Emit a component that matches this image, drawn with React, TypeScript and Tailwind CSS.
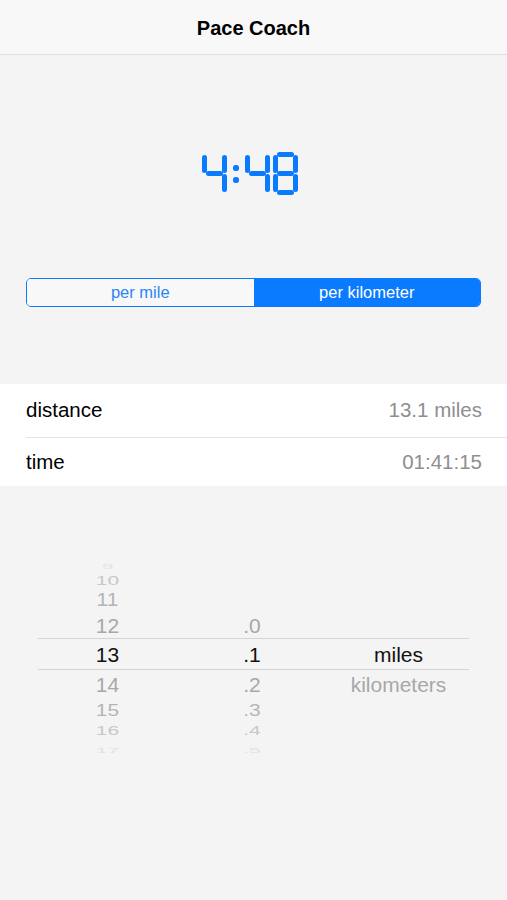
import React from 'react'

const BLUE = '#0a7aff'

// segments of a 7-seg digit, in a 25x43 box
const SEG: Record<string, [number, number, number, number]> = {
  a: [4, 0, 17, 5],
  b: [20, 3, 5, 18],
  c: [20, 22, 5, 18],
  d: [4, 38, 17, 5],
  e: [0, 22, 5, 18],
  f: [0, 3, 5, 18],
  g: [4, 19, 17, 5],
}

const DIGITS: Record<string, string> = {
  '4': 'bcfg',
  '8': 'abcdefg',
}

function Digit({ ch, x }: { ch: string; x: number }) {
  return (
    <g transform={`translate(${x} 0)`}>
      {DIGITS[ch].split('').map(s => {
        const [sx, sy, w, h] = SEG[s]
        return <rect key={s} x={sx} y={sy} width={w} height={h} rx={2.5} fill={BLUE} />
      })}
    </g>
  )
}

function PaceDisplay() {
  return (
    <svg width="100" height="43" viewBox="0 0 100 43" className="ml-[201px] block">
      <Digit ch="4" x={1} />
      <rect x={32} y={13} width={6} height={6} rx={2.5} fill={BLUE} />
      <rect x={32} y={25} width={6} height={6} rx={2.5} fill={BLUE} />
      <Digit ch="4" x={44} />
      <Digit ch="8" x={72} />
    </svg>
  )
}

const rows = [
  { h: 'h-[14px]', s: 'scale-y-[0.3]', c: 'text-[#e2e2e2]', v: ['9', '', ''] },
  { h: 'h-[16px]', s: 'scale-y-[0.6]', c: 'text-[#c8c8c8]', v: ['10', '', ''] },
  { h: 'h-[26px]', s: 'scale-y-[0.85]', c: 'text-[#b4b4b4]', v: ['11', '', ''] },
  { h: 'h-[26px]', s: 'scale-y-[0.95]', c: 'text-[#a8a8a8]', v: ['12', '.0', ''] },
  { h: 'h-[32px]', s: '', c: 'text-[#111]', v: ['13', '.1', 'miles'] },
  { h: 'h-[28px]', s: 'scale-y-[0.95]', c: 'text-[#a8a8a8]', v: ['14', '.2', 'kilometers'] },
  { h: 'h-[22px]', s: 'scale-y-[0.82]', c: 'text-[#b4b4b4]', v: ['15', '.3', ''] },
  { h: 'h-[20px]', s: 'scale-y-[0.6]', c: 'text-[#c8c8c8]', v: ['16', '.4', ''] },
  { h: 'h-[10px]', s: 'scale-y-[0.3]', c: 'text-[#e2e2e2]', v: ['17', '.5', ''] },
]

export default function App() {
  return (
    <div className="min-h-[900px] bg-[#f4f4f4] font-['Liberation_Sans',Arial,sans-serif]">
      {/* Nav bar */}
      <header className="h-[55px] bg-[#f8f8f8] border-b border-[#dedede] flex items-center justify-center">
        <h1 className="text-[20px] font-bold text-black pt-[2px]">Pace Coach</h1>
      </header>

      <div className="pt-[97px]">
        <PaceDisplay />
      </div>

      <div className="mt-[83px] mx-[26px] h-[29px] flex rounded-[5px] border border-[#0a7aff] overflow-hidden text-[16.5px]">
        <button className="flex-1 bg-[#f8f8f8] text-[#2b86f5]">per mile</button>
        <button className="flex-1 bg-[#0a7aff] text-white">per kilometer</button>
      </div>

      {/* Table */}
      <div className="mt-[77px] bg-white text-[20.5px]">
        <div className="h-[53px] flex items-center justify-between pl-[26px] pr-[25px]">
          <span className="text-black">distance</span>
          <span className="text-[#8e8e93]">13.1 miles</span>
        </div>
        <div className="ml-[26px] border-t border-[#e4e4e4]" />
        <div className="h-[48px] flex items-center justify-between pl-[26px] pr-[25px]">
          <span className="text-black">time</span>
          <span className="text-[#8e8e93]">01:41:15</span>
        </div>
      </div>

      {/* Picker */}
      <div className="mt-[70px] mx-[38px] text-[21px]">
        {rows.map((r, i) => (
          <div
            key={i}
            className={`grid grid-cols-[139px_150px_143px] items-center ${r.h} ${r.c} ${
              i === 4 ? 'border-y border-[#d4d4d4]' : ''
            }`}
          >
            {r.v.map((t, j) => (
              <div key={j} className={`text-center leading-none ${r.s}`}>
                {t}
              </div>
            ))}
          </div>
        ))}
      </div>
    </div>
  )
}
